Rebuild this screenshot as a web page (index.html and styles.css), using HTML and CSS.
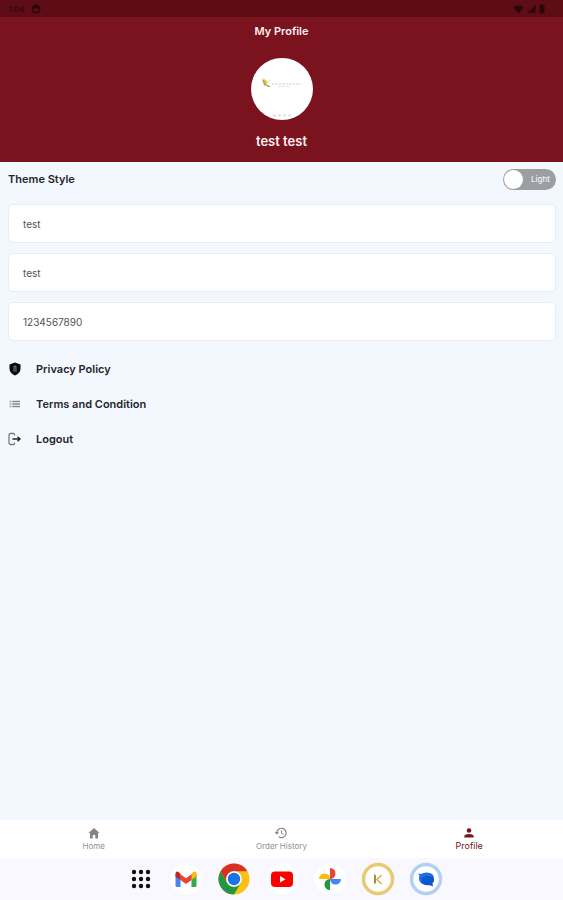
FILE: index.html
```html
<!DOCTYPE html>
<html lang="en">
<head>
<meta charset="utf-8">
<meta name="viewport" content="width=device-width, initial-scale=1">
<title>My Profile</title>
<link rel="stylesheet" href="styles.css">
</head>
<body>
<div class="status">
  <div class="status-group">
    <span>1:04</span>
    <svg width="10" height="10" viewBox="0 0 10 10"><circle cx="5" cy="5" r="3.7" fill="none" stroke="currentColor" stroke-width="1.6"/><path d="M2 2h6v3L5 4 3 5z" fill="currentColor"/></svg>
  </div>
  <div class="status-group status-right">
    <svg width="11" height="10" viewBox="0 0 11 10"><path d="M0 3Q5.500-.5 11 3L5.500 9.500z" fill="currentColor"/></svg>
    <svg width="9" height="10" viewBox="0 0 9 10"><path d="M8.500 1v8H.5z" fill="currentColor"/></svg>
    <svg width="6" height="10" viewBox="0 0 6 10"><path d="M2 0h2v1h1.500v8.500h-5V1H2z" fill="currentColor"/></svg>
  </div>
</div>
<header class="header">
  <h1>My Profile</h1>
  <svg class="avatar" viewBox="0 0 62 62" role="img" aria-label="Profile picture">
    <circle cx="31" cy="31" r="31" fill="#fff"/>
    <path d="M11 21l3 2 1 5-2-1zM20 21l-5 5 5 3-3 0-3-3z" fill="#b5a02c"/>
    <path d="M12 20l4 3-1 4z" fill="#ddc95e"/>
    <path d="M21 26h29" stroke="#e8e9dc" stroke-width="2" stroke-dasharray="2 1 3 1" fill="none"/>
    <path d="M27 28.500h12" stroke="#ecece1" fill="none"/>
    <path d="M22 57.500h18" stroke="#e2e2e2" stroke-width="2" stroke-dasharray="3 2" fill="none"/>
  </svg>
  <p class="name">test test</p>
</header>
<main class="content">
  <div class="theme-row">
    <span id="theme-label">Theme Style</span>
    <button class="toggle" type="button" role="switch" aria-checked="false" aria-labelledby="theme-label"><span class="knob"></span><span class="toggle-text">Light</span></button>
  </div>
  <form class="fields">
    <input type="text" value="test" aria-label="First name">
    <input type="text" value="test" aria-label="Last name">
    <input type="tel" value="1234567890" aria-label="Phone number">
  </form>
  <nav class="links" aria-label="Account">
    <a href="#privacy"><svg width="14" height="14" viewBox="0 0 14 14"><path d="M7 .5l5.500 2v4q0 4.500-5.500 7-5.500-2.500-5.500-7v-4z" fill="#08090b"/><path d="M5.500 6V5a1.500 1.500 0 013 0v1v3.500h-3z" fill="#777b80"/><path d="M7 5v4" stroke="#17191b" stroke-width="1"/></svg>Privacy Policy</a>
    <a href="#terms"><svg width="14" height="14" viewBox="0 0 14 14"><path d="M1.500 4.500h2M1.500 7h2M1.500 9.500h2" stroke="#a0a4aa" stroke-width="1.700"/><path d="M4.300 4.500H12M4.300 7H12M4.300 9.500H12" stroke="#888c92" stroke-width="1.700"/></svg>Terms and Condition</a>
    <a href="#logout"><svg width="14" height="14" viewBox="0 0 14 14"><path d="M6.500 3.500V2.500q0-1-1-1h-3q-1.500 0-1.500 1.500v8q0 1.500 1.500 1.500h3q1 0 1-1v-1" fill="none" stroke="#777b80" stroke-width="1.300"/><path d="M4.500 7H12M9.500 4.800L12 7 9.500 9.200" fill="none" stroke="#202226" stroke-width="1.400"/></svg>Logout</a>
  </nav>
</main>
<nav class="tabs" aria-label="Main">
  <a href="#home"><svg width="14" height="12" viewBox="0 0 14 12"><path d="M7 1l5.500 5H11v5.500H8.300V8H5.700v3.500H3V6H1.500z" fill="#858585"/></svg><span>Home</span></a>
  <a href="#orders"><svg width="14" height="12" viewBox="0 0 14 12"><path d="M2.800 6a4.700 4.700 0 111.700 3.600" fill="none" stroke="#858585" stroke-width="1.200"/><path d="M.7 5h4.200L2.800 7.700z" fill="#858585"/><path d="M7.500 3.300v3l2 1.200" fill="none" stroke="#858585"/></svg><span>Order History</span></a>
  <a class="active" href="#profile" aria-current="page"><svg width="14" height="12" viewBox="0 0 14 12"><circle cx="7" cy="3.500" r="2.300" fill="currentColor"/><path d="M2.300 10.500V9Q3 7 7 7t4.700 2v1.500z" fill="currentColor"/></svg><span>Profile</span></a>
</nav>
<footer class="dock">
  <button type="button" aria-label="All apps"><svg width="20" height="20" viewBox="0 0 20 20" fill="#111"><circle cx="3" cy="3" r="2.200"/><circle cx="10" cy="3" r="2.200"/><circle cx="17" cy="3" r="2.200"/><circle cx="3" cy="10" r="2.200"/><circle cx="10" cy="10" r="2.200"/><circle cx="17" cy="10" r="2.200"/><circle cx="3" cy="17" r="2.200"/><circle cx="10" cy="17" r="2.200"/><circle cx="17" cy="17" r="2.200"/></svg></button>
  <button type="button" aria-label="Gmail"><svg width="32" height="32" viewBox="0 0 32 32"><circle cx="16" cy="16" r="15.500" fill="#fff"/><path d="M5.500 11v11.500q0 1.500 1.500 1.500h3.500V13z" fill="#4285f4"/><path d="M21.500 13v11H25q1.500 0 1.500-1.500V11z" fill="#34a853"/><path d="M21.500 11.300l1.500-2q3.500-2 3.500 1.700v2.500l-5 3.500z" fill="#fbbc04"/><path d="M10.500 11.300l5.500 4 5.500-4V17L16 21l-5.500-4z" fill="#ea4335"/><path d="M5.500 13.500V11q0-3.700 3.500-1.700l1.500 2V17z" fill="#c5221f"/></svg></button>
  <button type="button" aria-label="Chrome"><svg width="32" height="32" viewBox="0 0 32 32"><circle cx="16" cy="16" r="15.500" fill="#fbc116"/><path d="M2.600 8.200A15.500 15.500 0 0129.400 8.200H16a7.800 7.800 0 00-6.800 11.600z" fill="#d93025"/><path d="M2.600 8.200l6.700 11.700A7.800 7.800 0 0022.700 20L16 31.500A15.500 15.500 0 012.600 8.200z" fill="#249447"/><circle cx="16" cy="16" r="7.800" fill="#fff"/><circle cx="16" cy="16" r="6.200" fill="#1a73e8"/></svg></button>
  <button type="button" aria-label="YouTube"><svg width="32" height="32" viewBox="0 0 32 32"><circle cx="16" cy="16" r="15.500" fill="#fff"/><rect x="5" y="8.500" width="22" height="15.500" rx="4" fill="#f00"/><path d="M14 13l5.500 3.200L14 19.500z" fill="#fff"/></svg></button>
  <button type="button" aria-label="Photos"><svg width="32" height="32" viewBox="0 0 32 32"><circle cx="16" cy="16" r="15.500" fill="#fff"/><path d="M16 16V5a5.500 5.500 0 010 11z" fill="#ea4335"/><path d="M16 16h11a5.500 5.500 0 01-11 0z" fill="#4285f4"/><path d="M16 16v11a5.500 5.500 0 010-11z" fill="#249447"/><path d="M16 16H5a5.500 5.500 0 0111 0z" fill="#fbbc04"/></svg></button>
  <button type="button" aria-label="K"><svg width="34" height="34" viewBox="0 0 34 34"><circle cx="17" cy="17" r="14.500" fill="#fff" stroke="#e8ca75" stroke-width="3.500"/><path d="M13 12l2 1.500V21l-2 1z" fill="#a08a4c"/><path d="M20.500 13L16 17.500l4.500 4.500" fill="none" stroke="#d9ae3c" stroke-width="1.500"/></svg></button>
  <button type="button" aria-label="Messages"><svg width="34" height="34" viewBox="0 0 34 34"><circle cx="17" cy="17" r="14.500" fill="#fff" stroke="#b2d0f3" stroke-width="3.500"/><path d="M9 11.500L12 12q2-1.500 5.500-1.500 7.500 0 7.500 6t-7.500 6-7.500-6q0-2 .5-3z" fill="#1b6fe4"/><path d="M12.500 18q0-4 6.300-4t6.200 4q0 2-1.500 3.200l.5 3.300-3-1.200q-8.500.7-8.500-5.300z" fill="#0b57d0"/></svg></button>
</footer>
</body>
</html>
```
FILE: styles.css
```css
* {
  box-sizing: border-box;
}

body {
  margin: 0;
  min-height: 100vh;
  display: flex;
  flex-direction: column;
  background: #f3f7fe;
  color: #24262b;
  font-family: Inter, Roboto, sans-serif;
  font-size: 11px;
  font-weight: 600;
}

svg {
  display: block;
  flex: none;
}

a {
  color: inherit;
  text-decoration: none;
}

.status {
  display: flex;
  justify-content: space-between;
  align-items: center;
  height: 17px;
  padding: 0 18px 0 8px;
  background: #5e0d16;
  color: #2d060b;
  font-size: 8px;
  font-weight: 500;
}

.status-group {
  display: flex;
  align-items: center;
  gap: 7px;
}

.status-right {
  gap: 3px;
}

.header {
  display: flex;
  flex-direction: column;
  align-items: center;
  padding: 6px 0 13px;
  background: #7b131e;
  color: #fbf1f2;
}

.header h1 {
  margin: 0;
  font-size: 11px;
  line-height: 16px;
  font-weight: 600;
}

.avatar {
  width: 62px;
  height: 62px;
  margin: 19px 0 13px;
}

.name {
  margin: 0;
  font-size: 13px;
  line-height: 16px;
  font-weight: 600;
}

.content {
  flex: 1;
  padding: 5px 7px 6px 8px;
}

.theme-row {
  display: flex;
  justify-content: space-between;
  align-items: center;
  height: 24px;
}

.toggle {
  display: flex;
  align-items: center;
  justify-content: space-between;
  width: 53px;
  height: 21px;
  padding: 0 6px 0 1px;
  border: 0;
  border-radius: 12px;
  background: #9b9fa2;
  color: #f1f3f5;
  font: 500 8px Inter, sans-serif;
}

.knob {
  width: 19px;
  height: 19px;
  border-radius: 50%;
  background: #fff;
}

.fields {
  display: grid;
  gap: 10px;
  margin: 13px 0 10px;
}

.fields input {
  width: 100%;
  height: 39px;
  padding: 0 14px;
  border: 1px solid #e9edf3;
  border-radius: 5px;
  background: #fff;
  color: #505257;
  font: 400 10px Inter, sans-serif;
}

.links a {
  display: flex;
  align-items: center;
  gap: 14px;
  height: 35px;
}

.tabs {
  display: grid;
  grid-template-columns: repeat(3, 1fr);
  height: 38px;
  background: #fff;
  color: #909090;
  font-size: 8px;
  line-height: 12px;
  font-weight: 400;
}

.tabs a {
  display: flex;
  flex-direction: column;
  align-items: center;
  gap: 1px;
  padding-top: 7px;
}

.tabs .active {
  color: #741522;
  font-size: 9px;
}

.dock {
  display: flex;
  justify-content: center;
  height: 42px;
  padding-left: 7px;
  background: #f9f8fe;
}

.dock button {
  display: flex;
  align-items: center;
  justify-content: center;
  width: 48px;
  padding: 0;
  border: 0;
  background: none;
}

.dock button:first-child {
  width: 42px;
}
```
